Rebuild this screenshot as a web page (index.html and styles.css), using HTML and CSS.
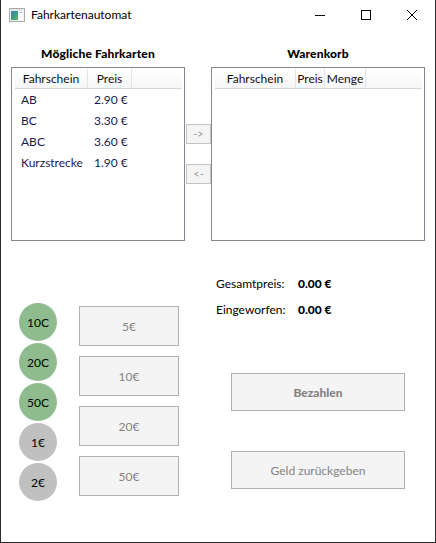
FILE: index.html
```html
<!DOCTYPE html>
<html lang="de">
<head>
<meta charset="utf-8">
<title>Fahrkartenautomat</title>
<link rel="stylesheet" href="styles.css">
</head>
<body>
<div class="window">
  <header class="titlebar">
    <svg class="appicon" width="16" height="14" viewBox="0 0 16 14">
      <defs>
        <linearGradient id="g1" x1="0" y1="0" x2="1" y2="1">
          <stop offset="0" stop-color="#3d7fb8"/>
          <stop offset="0.5" stop-color="#3c9a86"/>
          <stop offset="1" stop-color="#6bb25a"/>
        </linearGradient>
      </defs>
      <rect x="0.5" y="0.5" width="15" height="13" fill="#f2f2f2" stroke="#a9a9a9"/>
      <rect x="2" y="3" width="7" height="9" fill="url(#g1)"/>
      <rect x="10" y="3" width="4" height="9" fill="#ffffff"/>
      <rect x="11" y="4" width="2" height="1" fill="#8ab4d8"/>
      <rect x="2" y="1.5" width="12" height="1" fill="#d8d8d8"/>
    </svg>
    <span class="title">Fahrkartenautomat</span>
    <div class="controls">
      <span class="ctl"><svg width="10" height="10" viewBox="0 0 10 10"><path d="M0 5.5H10" stroke="#000" stroke-width="1"/></svg></span>
      <span class="ctl"><svg width="10" height="10" viewBox="0 0 10 10"><rect x="0.5" y="0.5" width="9" height="9" fill="none" stroke="#000" stroke-width="1"/></svg></span>
      <span class="ctl"><svg width="10" height="10" viewBox="0 0 10 10"><path d="M0 0L10 10M10 0L0 10" stroke="#000" stroke-width="1"/></svg></span>
    </div>
  </header>

  <main class="content">
    <section class="top">
      <div class="panel panel-left">
        <h2 class="panel-title">Mögliche Fahrkarten</h2>
        <div class="listview">
          <div class="lv-header">
            <span class="hcell c-left1">Fahrschein</span>
            <span class="hcell c-left2">Preis</span>
            <span class="hfill"></span>
          </div>
          <div class="lv-row"><span class="cell c-left1">AB</span><span class="cell c-left2">2.90 €</span></div>
          <div class="lv-row"><span class="cell c-left1">BC</span><span class="cell c-left2">3.30 €</span></div>
          <div class="lv-row"><span class="cell c-left1">ABC</span><span class="cell c-left2">3.60 €</span></div>
          <div class="lv-row"><span class="cell c-left1">Kurzstrecke</span><span class="cell c-left2">1.90 €</span></div>
        </div>
      </div>

      <div class="movebtns">
        <button class="mbtn">-&gt;</button>
        <button class="mbtn">&lt;-</button>
      </div>

      <div class="panel panel-right">
        <h2 class="panel-title">Warenkorb</h2>
        <div class="listview">
          <div class="lv-header">
            <span class="hcell c-right1">Fahrschein</span>
            <span class="hcell c-right2">Preis</span>
            <span class="hcell c-right3">Menge</span>
            <span class="hfill"></span>
          </div>
        </div>
      </div>
    </section>

    <section class="bottom">
      <div class="money">
        <div class="coins">
          <div class="coin cent">10C</div>
          <div class="coin cent">20C</div>
          <div class="coin cent">50C</div>
          <div class="coin euro">1€</div>
          <div class="coin euro">2€</div>
        </div>
        <div class="bills">
          <button class="bill">5€</button>
          <button class="bill">10€</button>
          <button class="bill">20€</button>
          <button class="bill">50€</button>
        </div>
      </div>

      <div class="summary">
        <div class="totals">
          <div class="trow"><span class="tlabel">Gesamtpreis:</span><span class="tvalue">0.00 €</span></div>
          <div class="trow"><span class="tlabel">Eingeworfen:</span><span class="tvalue">0.00 €</span></div>
        </div>
        <div class="actions">
          <button class="action bold">Bezahlen</button>
          <button class="action">Geld zurückgeben</button>
        </div>
      </div>
    </section>
  </main>
</div>
</body>
</html>
```

FILE: styles.css
```css
* { box-sizing: border-box; }

html, body {
  margin: 0;
  padding: 0;
  background: #ffffff;
}

body {
  font-family: "Lato", "Open Sans", "Liberation Sans", sans-serif;
  font-size: 12px;
  color: #000;
}

.window {
  width: 436px;
  height: 543px;
  background: #ffffff;
  border-left: 1px solid #2b2b2b;
  border-right: 1px solid #2b2b2b;
  border-bottom: 1px solid #2b2b2b;
  display: flex;
  flex-direction: column;
}

/* Title bar */
.titlebar {
  height: 31px;
  display: flex;
  align-items: flex-start;
  flex: none;
}

.appicon {
  margin: 8px 0 0 8px;
  flex: none;
}

.title {
  margin-left: 6px;
  line-height: 16px;
  margin-top: 7px;
  font-size: 12px;
  color: #000;
}

.controls {
  margin-left: auto;
  display: flex;
}

.ctl {
  width: 46px;
  height: 30px;
  display: flex;
  align-items: center;
  justify-content: center;
}

/* Content */
.content {
  flex: 1;
  display: flex;
  flex-direction: column;
}

.top {
  display: flex;
  padding-left: 10px;
  padding-top: 15px;
}

.panel-title {
  margin: 0 0 5px 0;
  font-size: 12px;
  font-weight: 900;
  line-height: 16px;
  text-align: center;
  letter-spacing: 0.15px;
}

.panel-left { width: 174px; }
.panel-right { width: 214px; }

.listview {
  height: 174px;
  border: 1px solid #828790;
  padding: 1px 2px 1px 3px;
  background: #fff;
}

.lv-header {
  display: flex;
  height: 20px;
  background: linear-gradient(#ffffff, #f5f6f7);
  border-bottom: 1px solid #d5d5d5;
}

.hcell {
  line-height: 19px;
  text-align: center;
  border-right: 1px solid #e3e5e7;
  color: #111;
  white-space: nowrap;
  overflow: hidden;
}

.hfill { flex: 1; }

.c-left1 { width: 73px; }
.c-left2 { width: 44px; }
.c-right1 { width: 81px; }
.c-right2 { width: 29px; }
.c-right3 { width: 41px; }

.lv-row {
  display: flex;
  height: 21px;
  line-height: 21px;
  color: #1a1a50;
}

.cell {
  padding-left: 6px;
  white-space: nowrap;
}

.movebtns {
  width: 26px;
  padding-top: 78px;
  padding-left: 1px;
  display: flex;
  flex-direction: column;
  gap: 20px;
}

.mbtn {
  width: 25px;
  height: 20px;
  padding: 0;
  margin: 0;
  background: #f4f4f4;
  border: 1px solid #c2c4c6;
  font-family: inherit;
  font-size: 11px;
  color: #9a9a9a;
  line-height: 16px;
}

/* Bottom */
.bottom {
  display: flex;
  flex: 1;
}

.money {
  display: flex;
  padding-left: 18px;
  padding-top: 62px;
  gap: 22px;
}

.coins {
  display: flex;
  flex-direction: column;
  gap: 2px;
}

.coin {
  width: 38px;
  height: 38px;
  border-radius: 50%;
  display: flex;
  align-items: center;
  justify-content: center;
  color: #000;
  font-size: 12px;
}

.cent { background: #8fbc8f; }
.euro { background: #c0c0c0; }

.bills {
  display: flex;
  flex-direction: column;
  gap: 10px;
  padding-top: 3px;
}

.bill {
  width: 100px;
  height: 40px;
  margin: 0;
  padding: 0;
  background: #f4f4f4;
  border: 1px solid #adb2b5;
  color: #838383;
  font-family: inherit;
  font-size: 12px;
}

.summary {
  margin-left: 37px;
  padding-top: 30px;
  display: flex;
  flex-direction: column;
}

.trow {
  display: flex;
  height: 26px;
  line-height: 26px;
}

.tlabel { width: 82px; }
.tvalue { font-weight: 900; }

.actions {
  margin-top: 50px;
  padding-left: 15px;
  display: flex;
  flex-direction: column;
  gap: 40px;
}

.action {
  width: 174px;
  height: 38px;
  margin: 0;
  padding: 0;
  background: #f4f4f4;
  border: 1px solid #adb2b5;
  color: #838383;
  font-family: inherit;
  font-size: 12px;
}

.action.bold { font-weight: 900; }
```
